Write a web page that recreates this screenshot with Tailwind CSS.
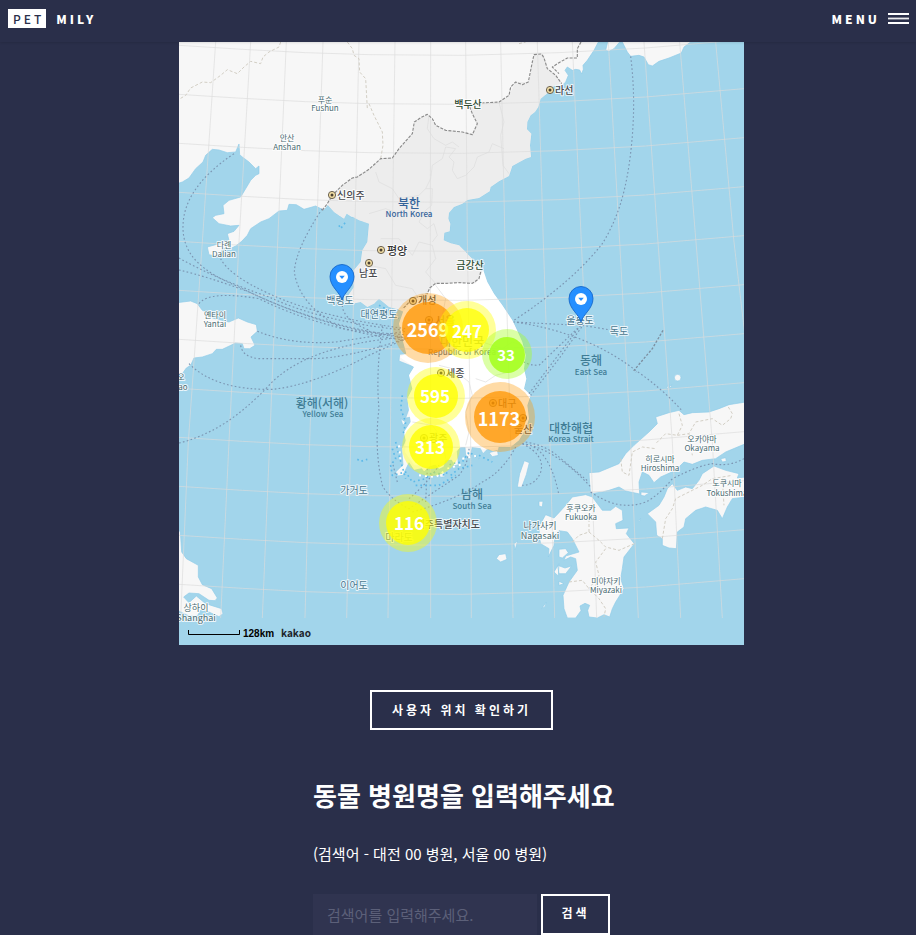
<!DOCTYPE html>
<html lang="ko">
<head>
<meta charset="utf-8">
<meta name="viewport" content="width=device-width, initial-scale=1">
<title>PET MILY</title>
<script src="https://cdn.jsdelivr.net/npm/@tailwindcss/browser@4"></script>
</head>
<body class="min-h-screen bg-[#2a2f4a] font-['Noto_Sans_CJK_KR',sans-serif] text-white">
<header class="relative z-10 flex h-[42px] items-start justify-between bg-[#2a2f4a] pl-2 pr-[7px] pt-[9px] text-xs leading-[19px] font-black tracking-[3px] shadow-[0_0_3px_rgba(0,0,0,0.2)]">
  <a href="#" class="flex gap-[10px]"><span class="bg-white pl-[5px] pr-[2px] font-medium text-[#2a2f4a]">PET</span><span>MILY</span></a>
  <a href="#menu" class="flex gap-2">MENU
    <svg class="h-[19px] w-[21px]" viewBox="0 0 21 19" fill="#fff" aria-hidden="true"><path d="M0 4h21v2H0zM0 13h21v2H0z"/><path d="M0 8.6h21v1.8H0z" opacity=".9"/></svg>
  </a>
</header>

<main class="flex flex-col items-center pl-[7px]">
  <svg class="block h-auto w-full max-w-[565px] bg-[#a2d5eb]" viewBox="0 0 565 603" role="img" aria-label="동물 병원 지도">
    <defs>
      <path id="lat" d="M0 0L190 12L380 22L570 28L850 30L1140 22L1400 8L1695-17"/>
      <g id="city"><circle r="3.6" fill="#f3dfa4" stroke="#6b6252" stroke-width="1"/><circle r="1.5" fill="#4a4034"/></g>
      <g id="pin"><path d="M0 23C-2 15-12 10-12-.5A12 12 0 0 1 12-.5C12 10 2 15 0 23Z" fill="#258fff" stroke="#1668c8" stroke-width=".9"/><circle r="6" fill="#fff"/><path d="M-2.8-1.3H2.8L0 2Z" fill="#258fff"/></g>
      <clipPath id="tiles"><path d="M0 0H1695V1728H0Z"/></clipPath>
    </defs>
    <g transform="scale(.33333)" clip-path="url(#tiles)" fill="none" stroke-linejoin="round">
      <g fill="#f7f7f7" stroke="#8fcbe8" stroke-width="2">
        <path d="M-5-5H1540L1535 0L1515 15L1507 33L1470 48L1440 58L1420 72L1408 68L1395 45L1380 40L1355 43L1345 30L1335 10L1330 0H1322L1305 20L1290 28L1280 25L1286 0H1258L1245 25L1225 55L1212 70L1213 82L1208 96L1202 84L1190 82L1180 85L1165 75L1158 85L1168 100L1160 120L1150 130L1125 132L1110 150L1085 170L1078 195L1068 210L1055 220L1045 240L1044 262L1057 275L1053 310L1056 345L1040 350L1000 372L990 402L960 418L935 435L932 448L900 468L865 474L850 485L825 495L810 512L808 530L814 545L812 568L796 572L794 595L815 604L840 610L855 625L875 646L898 668L910 690L925 720L945 755L970 790L1000 835L1012 860L1030 900L1040 940L1035 980L1042 1010L1035 1040L1055 1060L1045 1090L1050 1130L1040 1160L1020 1195L995 1215L960 1215L955 1245L940 1228L925 1222L912 1235L900 1212L880 1215L872 1248L860 1240L858 1215L845 1215L835 1228L838 1268L825 1272L818 1255L800 1255L795 1275L780 1282L770 1270L755 1272L735 1290L728 1280L705 1285L690 1262L672 1300L655 1302L650 1290L672 1268L668 1220L680 1195L675 1170L695 1140L700 1125L680 1128L690 1100L685 1070L700 1040L690 1000L705 975L660 957L662 937L682 935L670 890L660 845L672 810L650 800L630 795L600 770L585 785L565 795L545 780L520 785L508 760L525 735L520 690L545 660L550 625L565 600L570 545L555 538L540 535L528 525L516 525L503 515L495 530L482 522L465 510L447 490L435 505L410 492L375 502L352 488L330 487L325 505L300 507L270 530L245 540L215 560L205 580L188 598L170 612L150 622L132 618L120 645L90 638L85 615L110 608L150 595L145 575L165 568L180 550L155 552L120 545L100 527L110 520L135 515L132 490L150 475L185 465L200 440L215 415L230 400L240 395L240 372L230 380L210 360L190 345L182 338L180 306L170 330L145 332L120 324L100 322L80 340L72 360L50 380L30 408L10 420L-5 425Z"/>
        <path d="M-5 782L35 777L55 785L70 805L90 812L100 828L150 840L178 828L205 840L232 848L235 868L216 885L228 910L212 920L195 920L190 905L170 903L130 922L112 922L100 935L70 945L45 948L35 970L22 978L10 995L-5 1000Z"/>
        <path d="M-5 1460L4 1470L8 1530L22 1550L58 1570L58 1605L70 1628L98 1640L115 1668L108 1676L90 1675L60 1655L30 1653L14 1665L30 1682L52 1662L80 1685L128 1700L132 1715L120 1724L85 1708L65 1705L55 1722L30 1722L-5 1705Z"/>
        <path d="M1700 1080L1650 1088L1620 1100L1590 1110L1540 1112L1515 1118L1500 1105L1470 1112L1430 1125L1435 1145L1410 1170L1365 1210L1340 1235L1320 1265L1260 1290L1230 1292L1232 1325L1235 1355L1270 1350L1290 1345L1320 1335L1340 1347L1382 1356L1380 1320L1390 1290L1410 1300L1425 1322L1445 1305L1490 1285L1515 1260L1540 1267L1570 1255L1610 1250L1640 1230L1700 1205Z"/>
        <path d="M1465 1340L1480 1325L1495 1345L1520 1335L1540 1340L1560 1315L1570 1295L1605 1272L1640 1285L1680 1295L1675 1308L1700 1305V1365L1660 1370L1645 1395L1630 1430L1615 1405L1580 1395L1550 1405L1520 1430L1515 1455L1495 1470L1492 1520L1470 1518L1450 1510L1450 1490L1433 1480L1430 1440L1405 1415L1440 1390L1455 1365Z"/>
        <path d="M1082 1450L1100 1418L1125 1428L1140 1412L1160 1390L1180 1365L1220 1358L1240 1365L1270 1405L1295 1405L1310 1393L1330 1405L1332 1435L1310 1445L1312 1460L1350 1458L1342 1475L1366 1505L1335 1545L1330 1580L1325 1610L1335 1640L1310 1680L1300 1700L1292 1725L1275 1718L1255 1728L1230 1725L1226 1705L1232 1690L1218 1684L1203 1692L1206 1706L1190 1728H1165L1155 1700L1152 1660L1170 1620L1195 1585L1190 1550L1175 1545L1155 1555L1160 1542L1200 1530L1180 1490L1165 1470L1140 1466L1128 1480L1125 1510L1108 1545L1110 1520L1085 1505L1080 1480Z"/>
        <path d="M1036 1256L1051 1262L1042 1298L1028 1336L1015 1335L1022 1295ZM1080 1378L1092 1378L1090 1395L1080 1392ZM960 1538L980 1535L984 1552L965 1560L952 1550ZM1005 1505L1016 1497L1008 1524ZM1088 1700L1102 1680L1098 1694ZM1140 1522L1160 1520L1168 1532L1150 1548L1140 1545ZM1136 1570L1158 1578L1178 1572L1160 1595H1140ZM1125 1590L1140 1565L1138 1602ZM1140 1618L1155 1625L1140 1630Z"/>
        <path d="M1386 1350L1412 1352L1396 1362L1386 1360ZM1625 1250L1640 1247L1642 1258L1630 1260ZM1378 1436L1385 1430L1380 1440ZM530 755L555 758L565 775L545 770ZM665 1130L680 1140L672 1150ZM780 1296L795 1292L798 1304L784 1306ZM930 1232L955 1225L958 1240L940 1244Z"/>
        <circle cx="1496" cy="1007" r="10"/><path d="M1463 1036L1470 1028L1466 1040ZM1472 1034L1478 1028L1476 1038Z"/>
      </g>
      <path d="M912 682L925 720L945 755L970 790L1000 835L1012 860L1030 900L1040 940L1035 980L1042 1010L1035 1040L1055 1060L1045 1090L1050 1130L1040 1160L1020 1195L995 1215L960 1215L925 1222L880 1215L845 1215L800 1255L755 1272L705 1270L678 1230L680 1195L675 1170L695 1140L685 1070L700 1040L690 1000L705 975L662 945L682 935L670 890L660 845L672 810L700 775L745 755L765 728L800 722L890 724L905 700Z" fill="#fff"/>
      <path d="M447 490L460 460L490 430L520 408L570 382L605 350L640 348L660 320L700 275L710 235L745 217L770 250L800 265L850 270L880 275L895 245L880 215L870 190L905 183L960 180L990 160L1010 120L1050 120L1060 60L1065 38L1095 38L1105 80L1130 100L1145 125L1125 132L1110 150L1085 170L1078 195L1068 210L1055 220L1045 240L1044 262L1057 275L1053 310L1056 345L1040 350L1000 372L990 402L960 418L935 435L932 448L900 468L865 474L850 485L825 495L810 512L808 530L814 545L812 568L796 572L794 595L815 604L840 610L855 625L875 646L898 668L910 690L905 700L890 724L800 722L765 728L745 755L700 775L672 800L650 800L630 795L600 770L585 785L565 795L545 780L520 785L508 760L525 735L520 690L545 660L550 625L565 600L570 545L540 535L503 515L495 530L465 510Z" fill="#ededed"/>
      <g stroke="#dcdcdc" stroke-width="2">
        <path d="M960 180L975 240L965 280L972 370L990 395M975 320L940 305L930 330L895 345L885 375L860 400L835 410L820 385L825 360L810 345L830 320L800 315L790 350L760 370L755 410L740 440L760 440L758 490L740 505L720 540L745 560L765 545L775 580L760 600M750 220L745 260L765 290L800 310L820 300L840 315M590 390L600 420L640 440L660 470L720 460L740 440M570 515L620 500L660 515M605 590L660 590L700 640L720 600L760 610L770 650L740 690L770 725M570 670L620 680L650 730L700 740L720 770"/>
        <path d="M770 730L800 770L790 820L830 860L880 870L910 900L970 920L1000 900L1030 910M780 970L820 980L870 1020L880 1060L860 1110L870 1170L860 1210M700 1140L760 1150L790 1190L800 1250M890 1010L920 1020L950 1000L990 990"/>
      </g>
      <g stroke="#dcdcdc" stroke-opacity=".65" stroke-width="3">
        <use href="#lat" y="10"/><use href="#lat" y="157"/><use href="#lat" y="304"/><use href="#lat" y="451"/><use href="#lat" y="598"/><use href="#lat" y="745"/><use href="#lat" y="892"/><use href="#lat" y="1039"/><use href="#lat" y="1186"/><use href="#lat" y="1333"/><use href="#lat" y="1480"/><use href="#lat" y="1627"/>
        <path d="M110 0L70 600L28 1200L5 1728M215 0L180 600L150 1200L125 1728M322 0L296 600L272 1200L250 1728M432 0L412 600L392 1200L378 1728M540 0L527 600L515 1200L503 1728M648 0L640 600L634 1200L627 1728M755 0L754 600L755 1200L755 1728M860 0L865 600L875 1200L877 1728M965 0L978 600L995 1200L1002 1728M1075 0L1093 600L1113 1200L1127 1728M1180 0L1207 600L1235 1200L1253 1728M1288 0L1322 600L1355 1200L1378 1728M1395 0L1437 600L1480 1200L1505 1728M1502 0L1551 600L1600 1200L1630 1728M1610 0L1665 600L1700 900"/>
      </g>
      <g stroke="#d2cec4" stroke-width="3" stroke-dasharray="9 6">
        <path d="M305 0L300 15L270 30L252 45L245 65L215 58L195 75L175 95L145 83L125 100L95 122L70 120L35 138L20 160L0 172M505 0L520 20L525 40L540 50L542 90L560 110L565 200M570 185L585 220L610 270L612 310L605 350M1020 5L1040 0"/>
        <path d="M1500 1115L1510 1150L1495 1180L1460 1175L1430 1205M1495 1180L1530 1175L1550 1140L1600 1130L1630 1150L1655 1130L1660 1115L1645 1090M1530 1175L1540 1240M1325 1250L1330 1290L1350 1300L1360 1230L1390 1215L1430 1220M1450 1490L1460 1430L1480 1400L1490 1370L1540 1345L1570 1330L1600 1310L1660 1300M1630 1310L1635 1390"/>
        <path d="M1180 1500L1200 1480L1230 1470L1260 1495L1280 1515L1320 1525L1366 1505M1280 1520L1250 1560L1260 1600L1230 1640L1260 1670L1280 1700L1275 1725M1230 1470L1230 1400M1170 1620L1210 1615L1230 1640"/>
      </g>
      <g stroke="#8a8a8a" stroke-width="3.4" stroke-dasharray="9 4">
        <path d="M430 505L445 485L460 460L490 430L520 408L535 405L570 382L605 350L640 348L660 320L700 275L706 240L725 227L745 217L760 230L770 250L800 265L850 270L880 278L895 245L880 215L870 190L905 183L960 180L990 160L995 135L1010 120L1030 128L1048 120L1060 60L1065 38L1088 36L1095 48L1105 80L1130 100L1148 125"/>
        <path d="M1206 0L1195 20L1195 48L1165 48L1140 62L1120 75L1140 95"/>
        <path d="M905 690L900 710L880 724L840 722L800 724L770 724L752 738L745 755L700 770L672 800"/>
      </g>
      <g stroke="#7b95b2" stroke-width="3.4" stroke-dasharray="5 7">
        <path d="M165 335C60 405 10 480 12 560C14 640 70 690 180 735Q380 835 570 870L700 880"/>
        <path d="M0 648Q110 710 270 765Q430 840 680 865M0 684Q90 705 210 750Q420 850 670 885M125 650Q150 700 270 755Q420 825 680 860M60 785Q90 745 240 770Q420 860 680 895"/>
        <path d="M430 500Q350 620 346 690Q360 790 490 860L690 890M490 790Q490 830 570 865M235 868Q340 910 470 900L680 868M185 910Q190 945 240 950H400Q500 950 680 890M30 965Q110 1045 280 1042Q400 1030 570 940L680 890M0 1203Q140 1170 270 1030Q380 910 680 885"/>
        <path d="M610 850Q590 1000 600 1100Q585 1220 610 1330Q630 1370 690 1400L840 1300Q870 1260 870 1220M700 1410Q840 1370 910 1320Q970 1290 1010 1215M655 1320L640 1260M690 1370Q740 1330 780 1270M745 1280L740 1380"/>
        <path d="M1355 43Q1375 200 1350 370C1335 470 1310 540 1270 605Q1180 720 1005 835M1200 850L1005 840Q1220 870 1370 985Q1450 1040 1508 1105M1205 850L1050 1055M1205 850L1080 970Q1050 970 1035 960M1208 855L1140 950L1055 1060M1210 850L1320 868"/>
        <path d="M1030 1205Q1100 1240 1085 1290Q1070 1330 1030 1330M1030 1205Q1110 1210 1140 1360M1030 1205Q1130 1220 1235 1335M1040 1200Q1100 1210 1140 1245L1230 1320M1235 1350Q1320 1410 1400 1380Q1440 1360 1480 1310Q1560 1270 1600 1265Q1650 1275 1695 1250"/>
      </g>
      <path d="M1452 865L1420 920L1365 985L1372 990" stroke="#7d8fa0" stroke-width="4" stroke-dasharray="7 5"/>
      <g stroke="#5db9e8" stroke-width="5" stroke-dasharray="5 9">
        <path d="M640 1220L650 1250L635 1270L640 1300L680 1290L700 1320L740 1310L760 1290L800 1300L815 1265L850 1260L870 1230L900 1250M670 1060L665 1100L680 1140L672 1180M480 550L485 560L500 540M600 790L640 810L660 830M900 1240L940 1260M650 1200L660 1240L680 1310M710 1330L780 1330L830 1300M815 1300L840 1280L880 1270M535 1252L545 1258L565 1252"/>
      </g>
      <path d="M660 1210L665 1260M720 1300L770 1305L800 1285M850 1250L900 1240M805 1280L845 1268" stroke="#fff" stroke-width="6" stroke-dasharray="6 12"/>
    </g>

    <use href="#city" x="153" y="153"/><use href="#city" x="371" y="48"/><use href="#city" x="202" y="208"/><use href="#city" x="190" y="221"/><use href="#city" x="234" y="259"/><use href="#city" x="250" y="278"/><use href="#city" x="262" y="331"/><use href="#city" x="314" y="361"/><use href="#city" x="344" y="376"/><use href="#city" x="245" y="396"/>

    <g font-size="10" fill="#47494d" stroke="#fff" stroke-opacity=".8" stroke-width="2" stroke-linejoin="round" paint-order="stroke" class="font-medium">
      <text x="158" y="157">신의주</text><text x="376" y="52">라선</text><text x="208" y="213" font-size="11" fill="#333">평양</text><text x="180" y="235">남포</text><text x="239" y="262">개성</text><text x="256" y="283" font-size="11">서울</text><text x="267" y="335">세종</text><text x="319" y="365">대구</text><text x="335" y="391">울산</text><text x="250" y="400">광주</text>
      <text x="301" y="486" text-anchor="end">제주특별자치도</text>
      <g fill="#2d4b31" text-anchor="middle"><text x="289" y="66">백두산</text><text x="291" y="227">금강산</text></g>
    </g>
    <g font-size="8" fill="#4b6c72" stroke="#fff" stroke-opacity=".8" stroke-width="2" stroke-linejoin="round" paint-order="stroke" text-anchor="middle">
      <text x="146" y="61">푸순</text><text x="146" y="69">Fushun</text><text x="108" y="99">안산</text><text x="108" y="108">Anshan</text>
      <text x="45" y="206">다롄</text><text x="45" y="215">Dalian</text><text x="36" y="276">옌타이</text><text x="36" y="285">Yantai</text>
      <text x="2" y="338">오</text><text x="4" y="348">ao</text><text x="17" y="569" font-size="9">상하이</text><text x="17" y="579" font-size="9">Shanghai</text>
      <text x="361" y="487" font-size="9">나가사키</text><text x="361" y="497" font-size="9">Nagasaki</text><text x="402" y="469">후쿠오카</text><text x="402" y="478">Fukuoka</text>
      <text x="481" y="420">히로시마</text><text x="481" y="429">Hiroshima</text><text x="523" y="400">오카야마</text><text x="523" y="409">Okayama</text>
      <text x="548" y="444">도쿠시마</text><text x="548" y="454">Tokushima</text><text x="427" y="542">미야자키</text><text x="427" y="551">Miyazaki</text>
      <g font-size="10" fill="#4a7890"><text x="161" y="262">백령도</text><text x="200" y="276">대연평도</text><text x="401" y="282">울릉도</text><text x="440" y="293">독도</text><text x="175" y="452">가거도</text><text x="175" y="547">이어도</text><text x="220" y="499">마라도</text></g>
    </g>
    <g font-size="8" fill="#3f7c95" text-anchor="middle" class="font-medium">
      <text x="143" y="366" font-size="12">황해(서해)</text><text x="144" y="375">Yellow Sea</text>
      <text x="412" y="323" font-size="12">동해</text><text x="412" y="333">East Sea</text>
      <text x="392" y="391" font-size="12">대한해협</text><text x="392" y="400">Korea Strait</text>
      <text x="293" y="457" font-size="12">남해</text><text x="293" y="467">South Sea</text>
      <g fill="#34639a"><text x="230" y="166" font-size="12">북한</text><text x="230" y="175">North Korea</text></g>
      <g fill="#5f7389"><text x="283" y="304" font-size="12">대한민국</text><text x="283" y="313">Republic of Korea</text></g>
    </g>

    <use href="#pin" x="163" y="235"/><use href="#pin" x="402" y="257"/>

    <g font-size="17" fill="#fff" text-anchor="middle" class="font-bold">
      <g><circle cx="249" cy="286" r="35" fill="#ff9900" fill-opacity=".35"/><circle cx="249" cy="286" r="26" fill="#ff9500" fill-opacity=".75"/><text x="249" y="295" font-size="18">2569</text></g>
      <g><circle cx="288" cy="288" r="29" fill="#ffff00" fill-opacity=".4"/><circle cx="288" cy="288" r="22" fill="#ffff00" fill-opacity=".75"/><text x="288" y="296">247</text></g>
      <g><circle cx="328" cy="312" r="25" fill="#a5ff20" fill-opacity=".4"/><circle cx="328" cy="313" r="18" fill="#a5ff20" fill-opacity=".9"/><text x="327" y="319" font-size="15">33</text></g>
      <g><circle cx="257" cy="354" r="29" fill="#ffff00" fill-opacity=".4"/><circle cx="257" cy="354" r="22" fill="#ffff00" fill-opacity=".8"/><text x="256" y="361">595</text></g>
      <g><circle cx="321" cy="375" r="35" fill="#ff9900" fill-opacity=".35"/><circle cx="321" cy="375" r="26" fill="#ff9500" fill-opacity=".75"/><text x="320" y="384" font-size="18">1173</text></g>
      <g><circle cx="252" cy="405" r="29" fill="#ffff00" fill-opacity=".4"/><circle cx="252" cy="405" r="22" fill="#ffff00" fill-opacity=".8"/><text x="251" y="412">313</text></g>
      <g><circle cx="229" cy="481" r="29" fill="#ffff00" fill-opacity=".4"/><circle cx="229" cy="481" r="22" fill="#ffff00" fill-opacity=".8"/><text x="230" y="488">116</text></g>
    </g>

    <path d="M9.5 588V592.5H60.5V588" fill="none" stroke="#000"/>
    <text x="64" y="595" font-size="10" class="font-['Liberation_Sans',sans-serif] font-bold">128km</text>
    <text x="102" y="595" font-size="10" fill="#1e252b" class="font-bold">kakao</text>
  </svg>

  <button type="button" class="mt-[45px] h-10 border-2 border-white px-5 pb-px text-xs font-semibold tracking-[3px]">사용자 위치 확인하기</button>

  <section class="mt-[45px] w-[297px]">
    <h2 class="text-[26px] leading-10 font-bold whitespace-nowrap">동물 병원명을 입력해주세요</h2>
    <p class="mt-[27px] text-[15px] leading-6">(검색어 - 대전 00 병원, 서울 00 병원)</p>
    <form class="mt-[28px] flex items-start gap-1">
      <label for="q" class="sr-only">동물 병원명</label>
      <input id="q" type="text" placeholder="검색어를 입력해주세요." class="h-[41px] w-0 min-w-0 grow bg-[#303450] px-[14px] text-[15px] text-white outline-none placeholder:text-[#5c6079]">
      <button type="submit" class="h-[41px] w-[69px] shrink-0 border-2 border-white pb-1 text-xs font-semibold tracking-[3px]">검색</button>
    </form>
  </section>
</main>
</body>
</html>
